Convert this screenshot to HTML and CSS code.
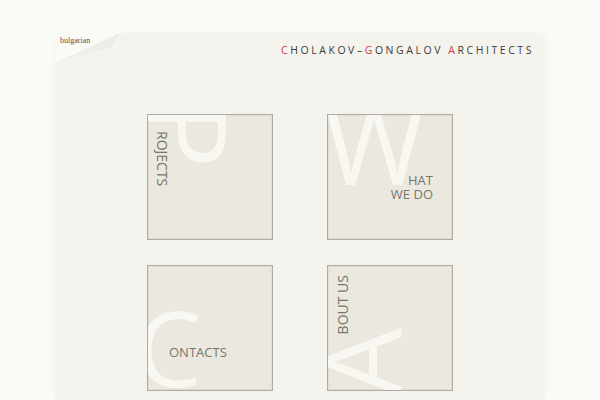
FILE: index.html
```html
<!DOCTYPE html>
<html lang="en">
<head>
<meta charset="utf-8">
<title>Cholakov–Gongalov Architects</title>
<link rel="stylesheet" href="styles.css">
</head>
<body>
<div class="page">
  <svg class="fold" width="66" height="31" viewBox="0 0 66 31" aria-hidden="true">
    <defs>
      <linearGradient id="fg" x1="0" y1="1" x2="1" y2="0">
        <stop offset="0" stop-color="#f2f1ec"/>
        <stop offset="1" stop-color="#ebeae4"/>
      </linearGradient>
    </defs>
    <polygon points="0,0 66,0 0,30" fill="#fafaf7"/>
    <polygon points="0,30 65,0 56,14" fill="url(#fg)"/>
  </svg>
  <header class="header">
    <a class="lang">bulgarian</a>
    <h1 class="title"><span class="red">C</span>HOLAKOV–<span class="red">G</span>ONGALOV <span class="red">A</span>RCHITECTS</h1>
  </header>
  <main class="grid">
    <a class="tile tile-projects">
      <svg class="big" viewBox="0 0 124 124" aria-hidden="true"><text x="-1" y="-13" transform="rotate(90 -1 -13)" font-size="110">P</text></svg>
      <span class="label vert">ROJECTS</span>
    </a>
    <a class="tile tile-what">
      <svg class="big" viewBox="0 0 124 124" aria-hidden="true"><text x="-4" y="70" font-size="109">W</text></svg>
      <span class="label">HAT</span>
      <span class="label">WE DO</span>
    </a>
    <a class="tile tile-contacts">
      <svg class="big" viewBox="0 0 124 124" aria-hidden="true"><text x="-12" y="121" font-size="104">C</text></svg>
      <span class="label">ONTACTS</span>
    </a>
    <a class="tile tile-about">
      <svg class="big" viewBox="0 0 124 124" aria-hidden="true"><text x="74" y="130" transform="rotate(-90 74 130)" font-size="108">A</text></svg>
      <span class="label vert up">BOUT US</span>
    </a>
  </main>
</div>
</body>
</html>
```
FILE: styles.css
```css
html, body {
  margin: 0;
  padding: 0;
}
body {
  background: #fafaf7;
  font-family: "Open Sans", "Liberation Sans", sans-serif;
  overflow: hidden;
}
.page {
  position: relative;
  margin: 33px 0 0 55px;
  width: 490px;
  height: 367px;
  background: #f4f3ee;
  box-shadow: -3px 0 4px rgba(0,0,0,0.015), 3px 0 4px rgba(0,0,0,0.015);
}
.fold {
  position: absolute;
  left: 0;
  top: 0;
  display: block;
}
.header {
  position: relative;
  z-index: 1;
  display: flex;
  justify-content: space-between;
  align-items: flex-start;
  padding: 3px 11px 0 5px;
}
.lang {
  font-family: "Liberation Serif", serif;
  font-size: 8px;
  line-height: 10px;
  color: #555;
}
.title {
  margin: 7px 0 0 0;
  font-weight: normal;
  font-size: 10.5px;
  line-height: 14px;
  letter-spacing: 2.55px;
  color: #3c3c3a;
}
.red {
  color: #d23a47;
}
.grid {
  display: grid;
  grid-template-columns: 126px 126px;
  grid-auto-rows: 126px;
  column-gap: 54px;
  row-gap: 25px;
  justify-content: center;
  margin-top: 57px;
}
.tile {
  position: relative;
  overflow: hidden;
  box-sizing: border-box;
  display: flex;
  border: 1px solid #aeaca2;
  box-shadow: inset 0 0 0 1px #dfddd3;
  background: #ebe9df;
}
.big {
  position: absolute;
  left: 0;
  top: 0;
  width: 124px;
  height: 124px;
  overflow: visible;
  font-family: "Open Sans", sans-serif;
  fill: #f8f7f2;
}
.label {
  position: relative;
  font-size: 13px;
  line-height: 14px;
  color: #77756c;
  white-space: nowrap;
}
.vert {
  writing-mode: vertical-rl;
  font-size: 14px;
}
.tile-projects {
  padding: 16px 0 0 7px;
  align-items: flex-start;
}
.tile-what {
  flex-direction: column;
  align-items: flex-end;
  padding: 58px 19px 0 0;
}
.tile-contacts {
  padding: 79px 0 0 21px;
  align-items: flex-start;
}
.tile-about {
  flex-direction: column;
  justify-content: flex-end;
  align-items: flex-start;
  padding: 0 0 56px 8px;
}
.up {
  transform: rotate(180deg);
}
```
